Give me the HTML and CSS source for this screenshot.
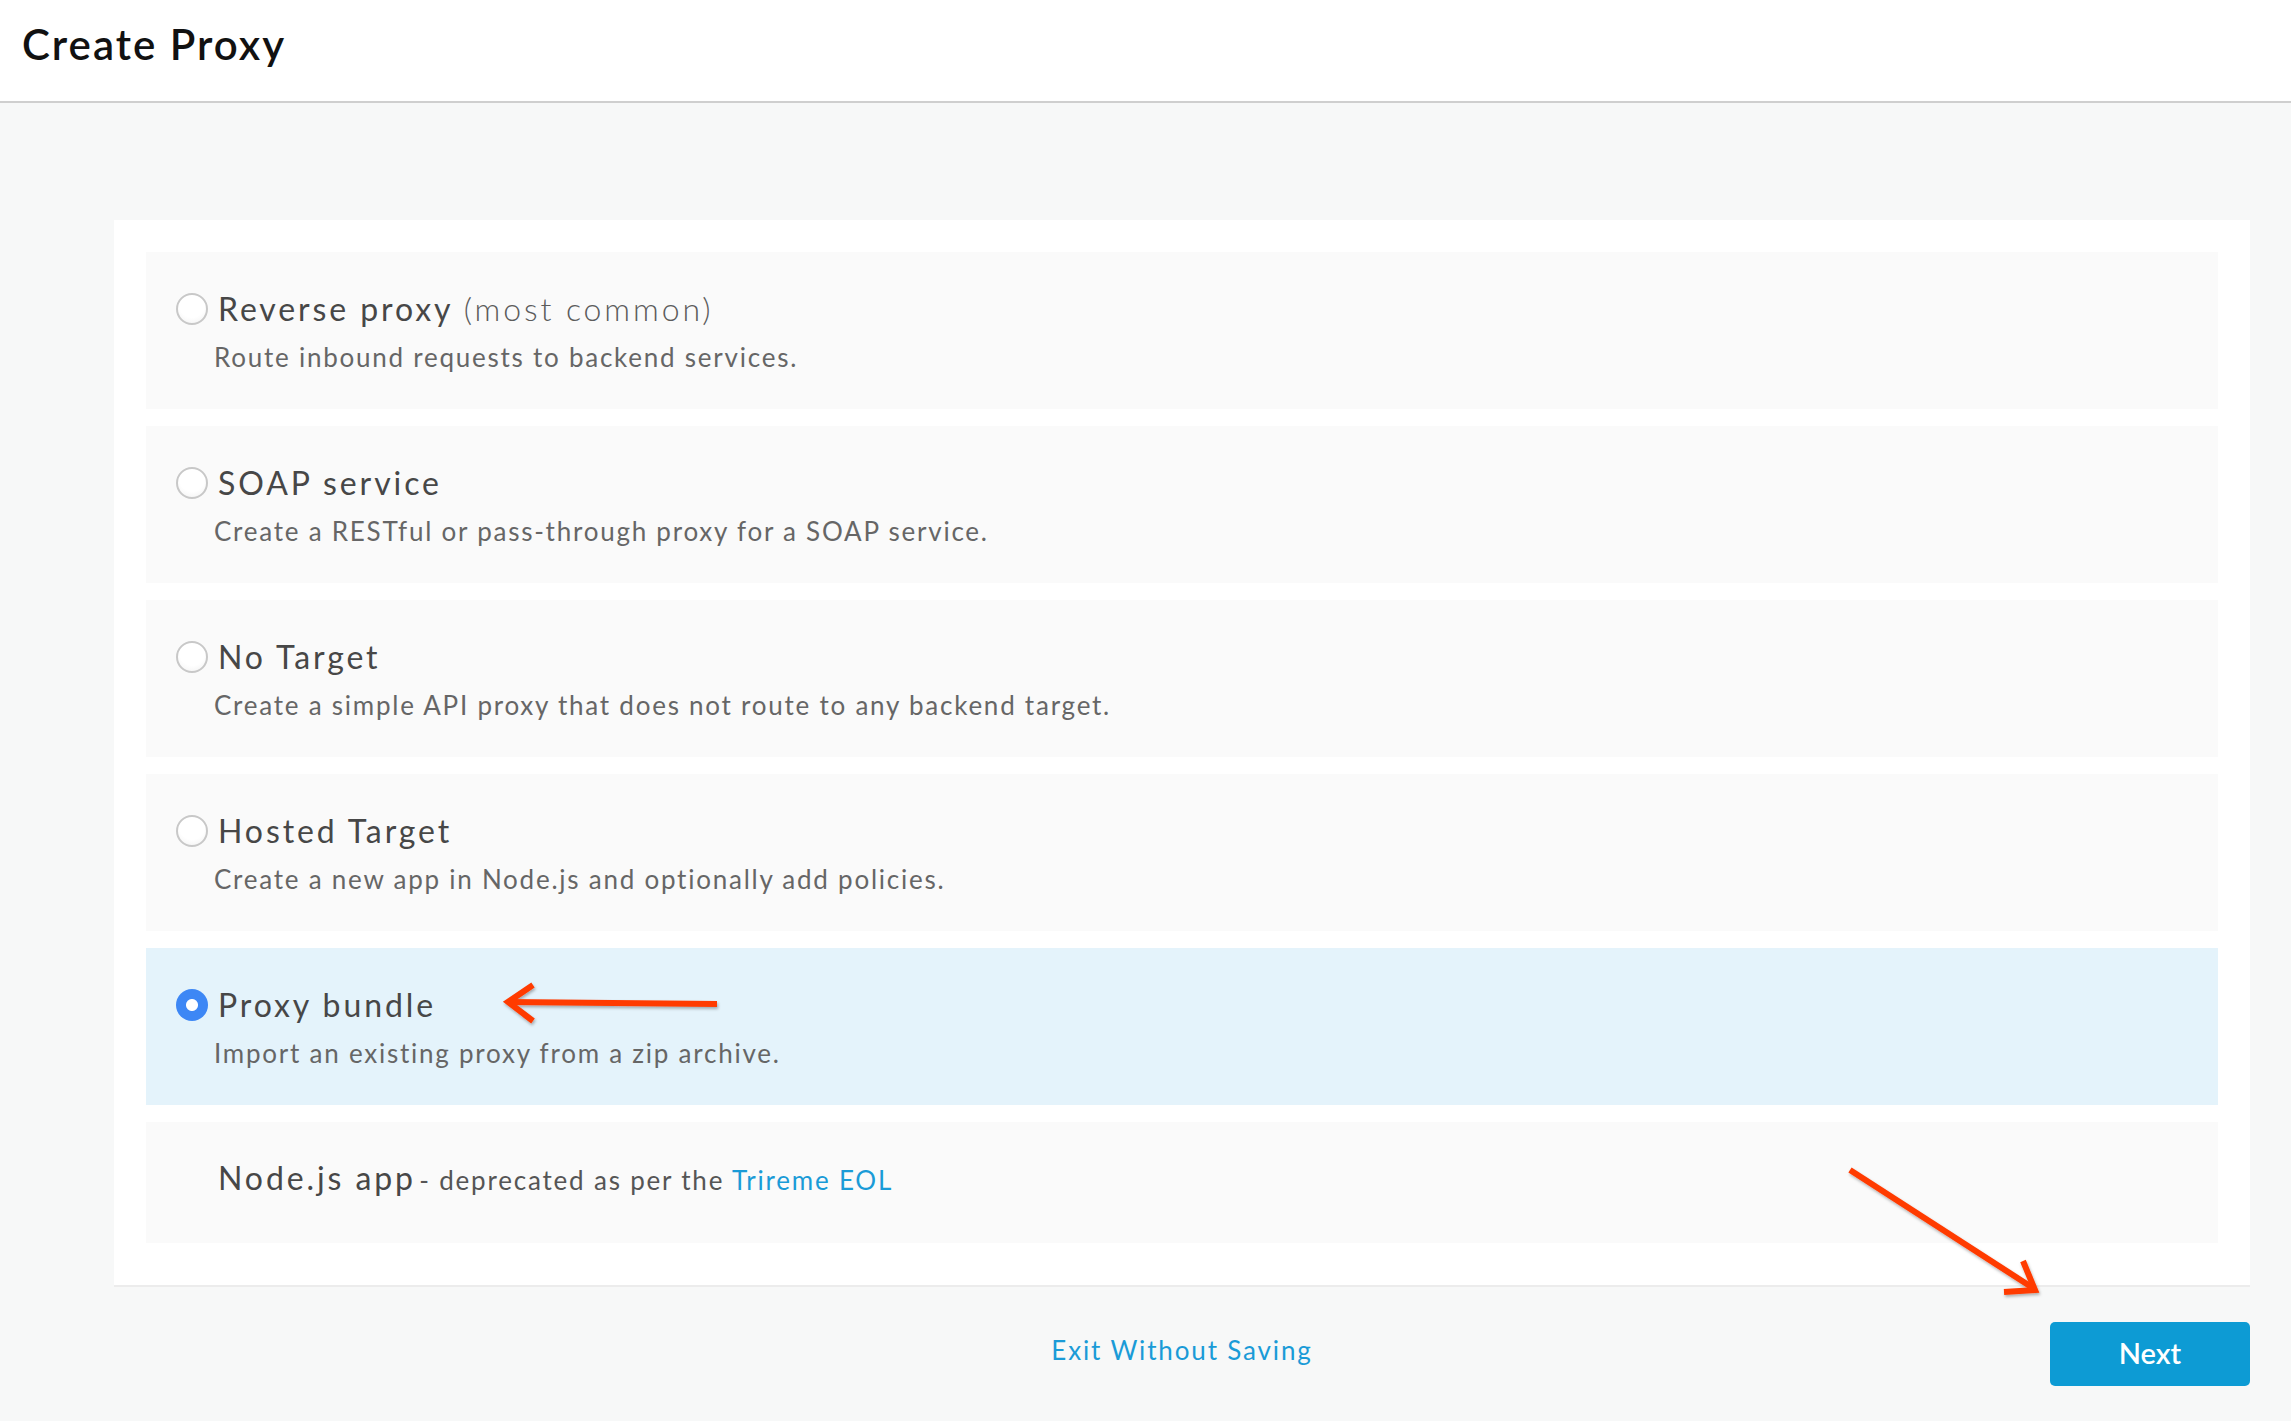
FILE: index.html
```html
<!DOCTYPE html>
<html lang="en">
  <head>
    <meta charset="utf-8">
    <title>Create Proxy</title>
    <link rel="stylesheet" href="styles.css">
  </head>
  <body>
    <div class="page">

      <header class="topbar">
        <h1>Create Proxy</h1>
      </header>

      <main class="content">
        <div class="card">

          <label class="option">
            <span class="optionHead">
              <span class="radio"></span>
              <span class="optionTitle">Reverse proxy <span class="hint">(most common)</span></span>
            </span>
            <span class="optionDesc">Route inbound requests to backend services.</span>
          </label>

          <label class="option">
            <span class="optionHead">
              <span class="radio"></span>
              <span class="optionTitle">SOAP service</span>
            </span>
            <span class="optionDesc">Create a RESTful or pass-through proxy for a SOAP service.</span>
          </label>

          <label class="option">
            <span class="optionHead">
              <span class="radio"></span>
              <span class="optionTitle">No Target</span>
            </span>
            <span class="optionDesc">Create a simple API proxy that does not route to any backend target.</span>
          </label>

          <label class="option">
            <span class="optionHead">
              <span class="radio"></span>
              <span class="optionTitle">Hosted Target</span>
            </span>
            <span class="optionDesc">Create a new app in Node.js and optionally add policies.</span>
          </label>

          <label class="option selected">
            <span class="optionHead">
              <span class="radio checked"></span>
              <span class="optionTitle">Proxy bundle</span>
            </span>
            <span class="optionDesc">Import an existing proxy from a zip archive.</span>
          </label>

          <div class="option deprecated">
            <span class="optionHead">
              <span class="optionTitle">Node.js app<span class="note"> - deprecated as per the <a href="#" class="link">Trireme EOL</a></span></span>
            </span>
          </div>

        </div>

        <div class="actions">
          <a href="#" class="exitLink">Exit Without Saving</a>
          <button class="nextButton">Next</button>
        </div>
      </main>

      <!-- red callout arrows drawn over the screen -->
      <svg class="annotations" width="2291" height="1421" viewBox="0 0 2291 1421">
        <defs>
          <filter id="arrowShadow" x="-10%" y="-10%" width="120%" height="120%">
            <feDropShadow dx="1" dy="2" stdDeviation="1.5" flood-color="#000" flood-opacity="0.3"/>
          </filter>
        </defs>
        <g fill="none" stroke="#ff3b00" stroke-width="6" filter="url(#arrowShadow)">
          <line x1="717" y1="1004" x2="509" y2="1002"/>
          <polyline points="533,985 508,1002 533,1021"/>
          <line x1="1850" y1="1170" x2="2033" y2="1288"/>
          <polyline points="2023,1261 2035,1290 2004,1292"/>
        </g>
      </svg>

    </div>
  </body>
</html>
```

FILE: styles.css
```css
body{
  margin: 0;
  background-color: #f7f8f8;
  font-family: Lato, "Liberation Sans", sans-serif;
  color: #4a4a4a;
}

.page{
  position: relative;
  min-height: 1421px;
}

.topbar{
  box-sizing: border-box;
  height: 103px;
  padding: 19px 22px 0;
  background: #ffffff;
  border-bottom: 2px solid #cfcfcf;
}

.topbar h1{
  margin: 0;
  font-size: 42px;
  font-weight: 600;
  line-height: 1.2;
  letter-spacing: 2px;
  color: #111111;
}

.content{
  margin: 117px 41px 0 114px;
}

.card{
  display: flex;
  flex-direction: column;
  gap: 17px;
  padding: 32px 32px 42px;
  background: #ffffff;
  border-bottom: 2px solid #ececec;
}

.option{
  display: block;
  height: 157px;
  box-sizing: border-box;
  padding: 37px 30px 0;
  background: #fafafa;
  cursor: pointer;
}

.option.selected{
  background: #e4f3fb;
}

.option.deprecated{
  height: 121px;
  padding-left: 72px;
  cursor: default;
}

.optionHead{
  display: flex;
  align-items: center;
  gap: 10px;
  height: 40px;
}

.optionTitle{
  font-size: 32px;
  line-height: 40px;
  letter-spacing: 2.9px;
  color: #474747;
  white-space: nowrap;
}

.hint{
  font-weight: 300;
  color: #5c5c5c;
}

.note{
  margin-left: -5px;
  font-size: 26px;
  letter-spacing: 1.8px;
  color: #555555;
}

.link{
  color: #1a9bd7;
  text-decoration: none;
}

.optionDesc{
  display: block;
  margin: 11px 0 0 38px;
  font-size: 26px;
  line-height: 34px;
  letter-spacing: 1.76px;
  color: #666666;
}

.radio{
  flex: none;
  box-sizing: border-box;
  width: 32px;
  height: 32px;
  border-radius: 50%;
  border: 2px solid #c8c8c8;
  background: radial-gradient(circle at 50% 35%, #ffffff 55%, #f0f0f0 100%);
}

.radio.checked{
  border: none;
  background: radial-gradient(circle, #ffffff 0 5.5px, #3d87f5 6.5px);
}

.actions{
  display: grid;
  grid-template-columns: 1fr auto 1fr;
  align-items: start;
  margin-top: 35px;
}

.exitLink{
  grid-column: 2;
  margin-top: 11px;
  font-size: 26px;
  line-height: 34px;
  letter-spacing: 1.85px;
  color: #1a9bd7;
  text-decoration: none;
}

.nextButton{
  grid-column: 3;
  justify-self: end;
  width: 200px;
  height: 64px;
  padding: 0 0 3px;
  border: none;
  border-radius: 5px;
  background: #0d9bd4;
  color: #ffffff;
  font-family: Lato, "Liberation Sans", sans-serif;
  font-size: 29px;
  font-weight: 600;
  cursor: pointer;
}

.annotations{
  position: absolute;
  top: 0;
  left: 0;
  pointer-events: none;
}
```
